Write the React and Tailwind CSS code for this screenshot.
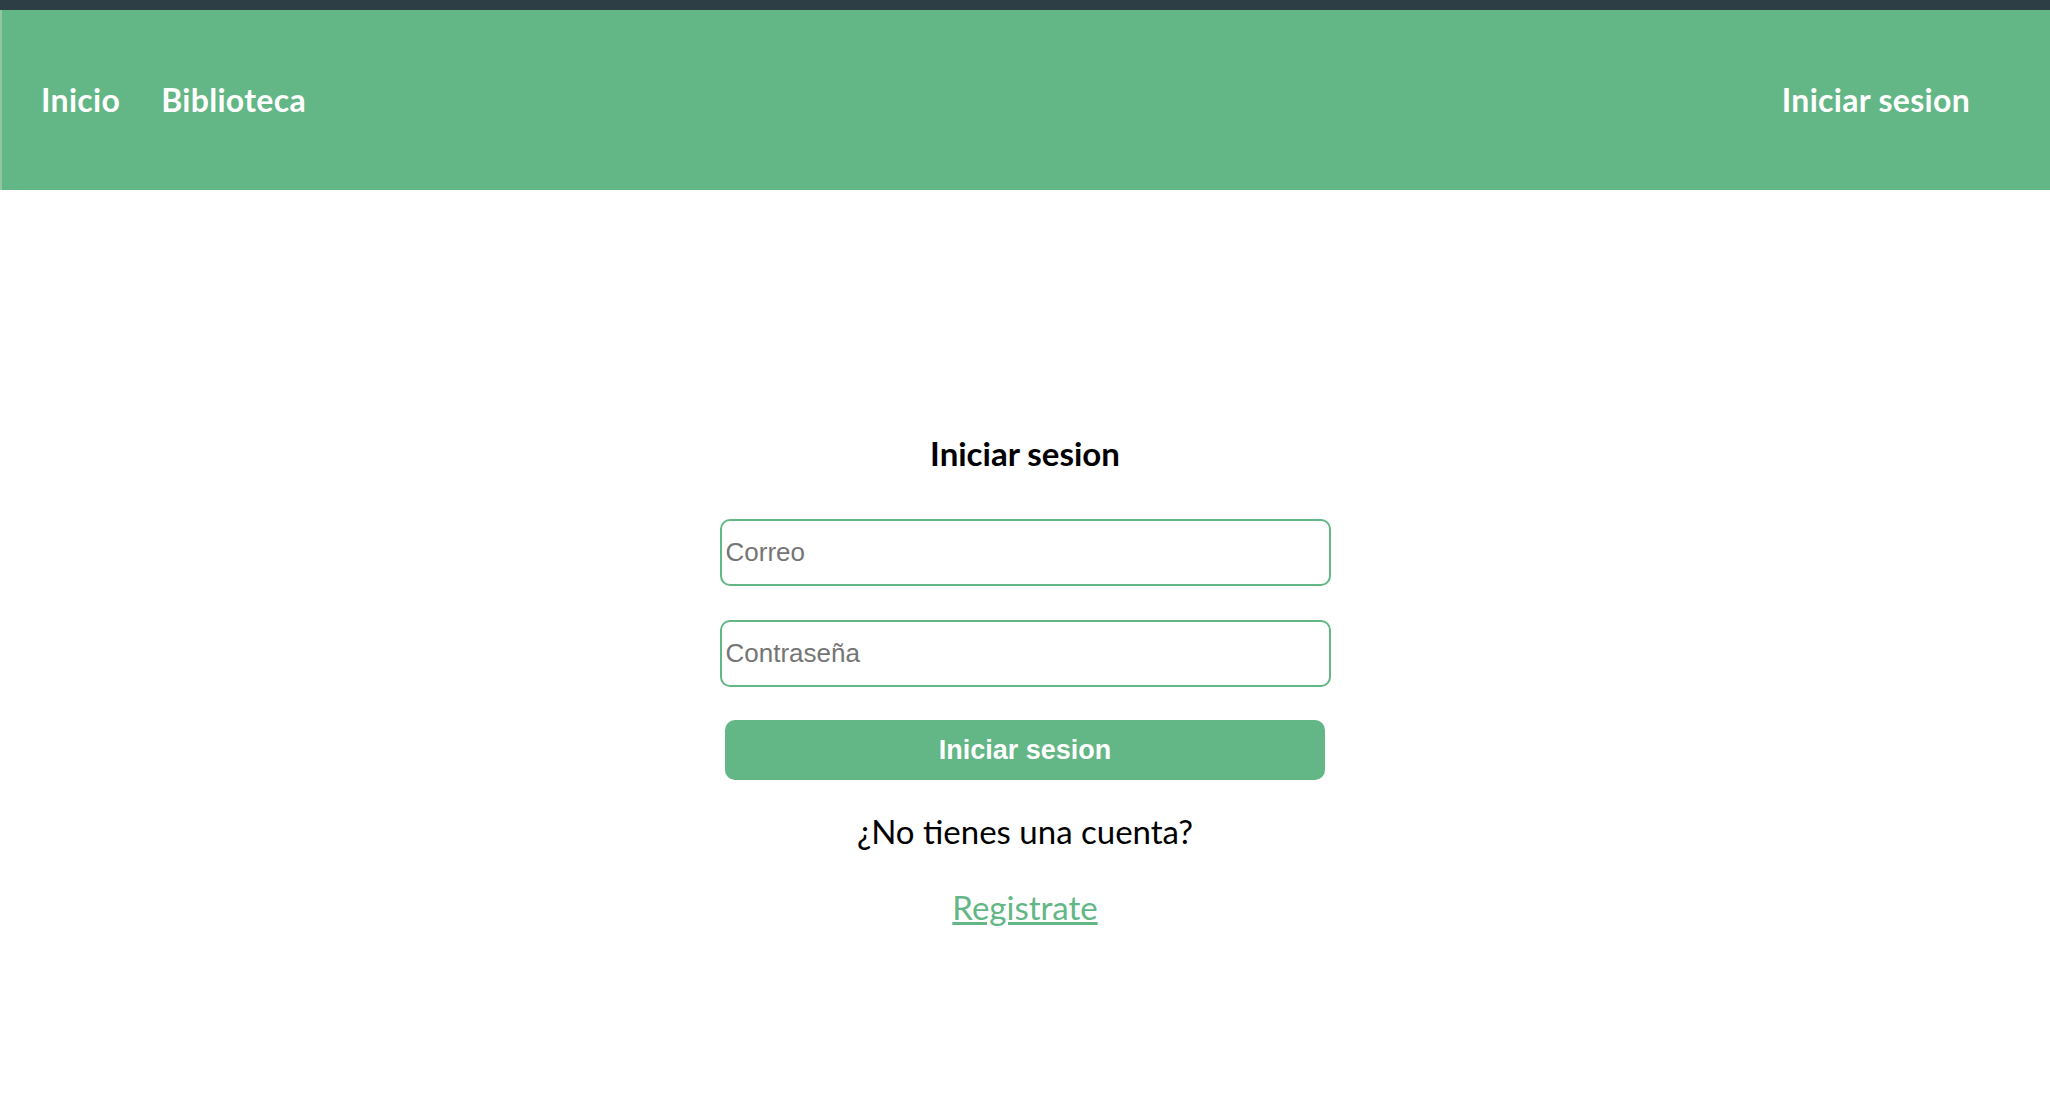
export default function App() {
  return (
    <div className="min-h-screen bg-white font-['Lato',sans-serif]">
      <div className="h-[10px] bg-[#2d3e45]" />

      {/* Barra de navegacion */}
      <nav className="h-[180px] bg-[#63b685] border-l-2 border-[#8fc6a3] pl-[39px] pr-[80px] flex items-center justify-between text-white text-[32px] font-bold tracking-[0.3px]">
        <div className="flex items-center gap-[41px]">
          <a href="#">Inicio</a>
          <a href="#">Biblioteca</a>
        </div>
        <a href="#">Iniciar sesion</a>
      </nav>

      {/* Formulario */}
      <main className="flex flex-col items-center pt-[247px]">
        <h1 className="text-[33px] font-bold text-black leading-none">Iniciar sesion</h1>
        <form className="w-[611px] mt-[49px] flex flex-col items-center">
          <input
            type="email"
            placeholder="Correo"
            className="w-full h-[67px] border-2 border-[#63b685] rounded-[10px] px-[4px] text-[26px] font-['Liberation_Sans',sans-serif] placeholder:text-[#757575] outline-none"
          />
          <input
            type="password"
            placeholder="Contraseña"
            className="w-full h-[67px] mt-[34px] border-2 border-[#63b685] rounded-[10px] px-[4px] text-[26px] font-['Liberation_Sans',sans-serif] placeholder:text-[#757575] outline-none"
          />
          <button
            type="button"
            className="w-[600px] h-[60px] mt-[33px] bg-[#63b685] rounded-[10px] text-white text-[27px] font-bold font-['Liberation_Sans',sans-serif]"
          >
            Iniciar sesion
          </button>
        </form>
        <p className="mt-[35px] text-[33px] text-black leading-none">¿No tienes una cuenta?</p>
        <a href="#" className="mt-[43px] text-[33px] text-[#63b685] underline leading-none">Registrate</a>
      </main>
    </div>
  )
}
